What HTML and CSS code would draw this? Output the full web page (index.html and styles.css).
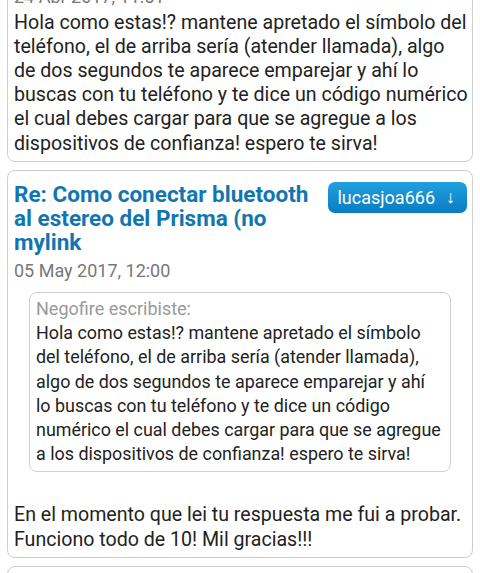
FILE: index.html
```html
<!DOCTYPE html>
<html lang="es">
<head>
<meta charset="utf-8">
<link rel="stylesheet" href="styles.css">
</head>
<body>
<div class="list">
  <div class="card card-first">
    <div class="date">24 Abr 2017, 11:51</div>
    <div class="text">Hola como estas!? mantene apretado el símbolo del teléfono, el de arriba sería (atender llamada), algo de dos segundos te aparece emparejar y ahí lo buscas con tu teléfono y te dice un código numérico el cual debes cargar para que se agregue a los dispositivos de confianza! espero te sirva!</div>
  </div>
  <div class="card">
    <div class="head">
      <div class="title">Re: Como conectar bluetooth al estereo del Prisma (no mylink</div>
      <div class="badge">lucasjoa666 <span class="arrow">↓</span></div>
    </div>
    <div class="date date-post">05 May 2017, 12:00</div>
    <div class="quote">
      <div class="quote-label">Negofire escribiste:</div>
      <div class="text quote-text">Hola como estas!? mantene apretado el símbolo del teléfono, el de arriba sería (atender llamada), algo de dos segundos te aparece emparejar y ahí lo buscas con tu teléfono y te dice un código numérico el cual debes cargar para que se agregue a los dispositivos de confianza! espero te sirva!</div>
    </div>
    <div class="text reply">En el momento que lei tu respuesta me fui a probar. Funciono todo de 10! Mil gracias!!!</div>
  </div>
  <div class="card card-next"></div>
</div>
</body>
</html>
```
FILE: styles.css
```css
html, body {
  margin: 0;
  padding: 0;
  background: #ffffff;
  overflow: hidden;
}
body {
  font-family: Roboto, "Noto Sans", sans-serif;
  color: #222222;
  width: 480px;
  height: 573px;
}
.list {
  display: flex;
  flex-direction: column;
  gap: 8px;
  padding: 0 7px;
}
.card {
  border: 1px solid #cfcfcf;
  border-radius: 8px;
  background: #fff;
  padding: 11px 3px 5px 6px;
}
.card-first {
  margin-top: -22px;
  padding-top: 6px;
}
.card-next {
  height: 40px;
}
.text {
  font-size: 19.6px;
  line-height: 24.2px;
}
.quote-text {
  font-size: 17.9px;
}
.card-first .text {
  margin-top: 1.4px;
}
.date {
  font-size: 18px;
  line-height: 24.2px;
  color: #777777;
}
.head {
  display: flex;
  align-items: flex-start;
  gap: 12px;
  padding-right: 2px;
}
.title {
  flex: 1;
  font-size: 22.5px;
  line-height: 24px;
  font-weight: 700;
  color: #1176b0;
}
.badge {
  flex: none;
  height: 31px;
  box-sizing: border-box;
  padding: 0 12px 0 9px;
  display: flex;
  align-items: center;
  gap: 11px;
  border-radius: 7px;
  background: linear-gradient(#21a0de, #0a7cc1);
  color: #ffffff;
  font-size: 18px;
}
.arrow {
  font-size: 18px;
}
.date-post {
  margin-top: 5px;
}
.quote {
  margin: 9px 18px 0 15px;
  border: 1px solid #cfcfcf;
  border-radius: 8px;
  padding: 4px 7px 5px 6px;
}
.quote-label {
  font-size: 18px;
  line-height: 24.2px;
  color: #999999;
}
.reply {
  margin-top: 31px;
}
```
